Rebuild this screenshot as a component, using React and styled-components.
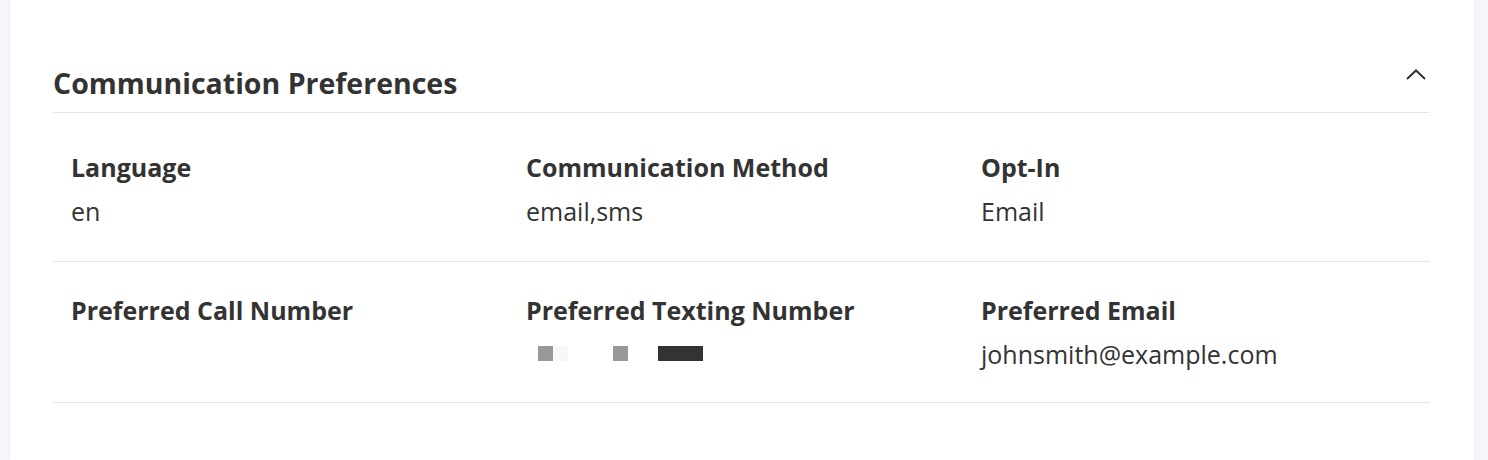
import React from 'react';
import styled, { createGlobalStyle } from 'styled-components';

const GlobalStyle = createGlobalStyle`
  body {
    margin: 0;
    background: #f5f6fa;
    font-family: 'Open Sans', 'Noto Sans', sans-serif;
    color: #333333;
  }
`;

const Page = styled.div`
  display: flex;
  padding: 0 14px 0 10px;
  height: 460px;
  box-sizing: border-box;
`;

const Card = styled.section`
  flex: 1;
  min-width: 0;
  background: #ffffff;
  padding: 56px 44px 0 43px;
  box-shadow: 0 0 3px rgba(40, 50, 90, 0.06);
`;

const Header = styled.div`
  display: flex;
  align-items: center;
  justify-content: space-between;
  height: 56px;
  border-bottom: 1px solid #e6e6e6;
`;

const Title = styled.h2`
  margin: 0;
  font-size: 28.5px;
  font-weight: 700;
  color: #333333;
  padding-bottom: 3px;
`;

const ToggleButton = styled.button`
  border: 0;
  background: transparent;
  padding: 0;
  margin-right: 4px;
  margin-bottom: 20px;
  display: flex;
  cursor: pointer;
`;

const Row = styled.div`
  display: grid;
  grid-template-columns: 455px 455px 1fr;
  padding: ${(props) => props.top}px 0 0 18px;
  height: ${(props) => props.height}px;
  box-sizing: border-box;
  border-bottom: 1px solid #e6e6e6;
`;

const Field = styled.div`
  display: flex;
  flex-direction: column;
  gap: 12px;
`;

const Label = styled.div`
  font-size: 25px;
  font-weight: 700;
  line-height: 32px;
  color: #333333;
`;

const Value = styled.div`
  font-size: 25px;
  font-weight: 400;
  line-height: 32px;
  color: #333333;
`;

const Redacted = styled.div`
  display: flex;
  height: 15px;
  margin: 8px 0 0 12px;
`;

const Block = styled.span`
  width: ${(props) => props.w}px;
  margin-left: ${(props) => props.gap || 0}px;
  background: ${(props) => props.color};
`;

const Chevron = () => (
  <svg width="20" height="11" viewBox="0 0 20 11" fill="none">
    <path d="M1 10 L10 1.5 L19 10" stroke="#333" strokeWidth="2" />
  </svg>
);

const App = () => (
  <>
    <GlobalStyle />
    <Page>
      <Card>
        <Header>
          <Title>Communication Preferences</Title>
          <ToggleButton aria-label="Collapse">
            <Chevron />
          </ToggleButton>
        </Header>
        <Row height={149} top={38}>
          <Field>
            <Label>Language</Label>
            <Value>en</Value>
          </Field>
          <Field>
            <Label>Communication Method</Label>
            <Value>email,sms</Value>
          </Field>
          <Field>
            <Label>Opt-In</Label>
            <Value>Email</Value>
          </Field>
        </Row>
        <Row height={141} top={32}>
          <Field>
            <Label>Preferred Call Number</Label>
          </Field>
          <Field>
            <Label>Preferred Texting Number</Label>
            <Redacted>
              <Block w={15} color="#999999" />
              <Block w={15} color="#f8f8f8" />
              <Block w={15} gap={45} color="#999999" />
              <Block w={45} gap={30} color="#333333" />
            </Redacted>
          </Field>
          <Field>
            <Label>Preferred Email</Label>
            <Value>johnsmith@example.com</Value>
          </Field>
        </Row>
      </Card>
    </Page>
  </>
);

export default App;
